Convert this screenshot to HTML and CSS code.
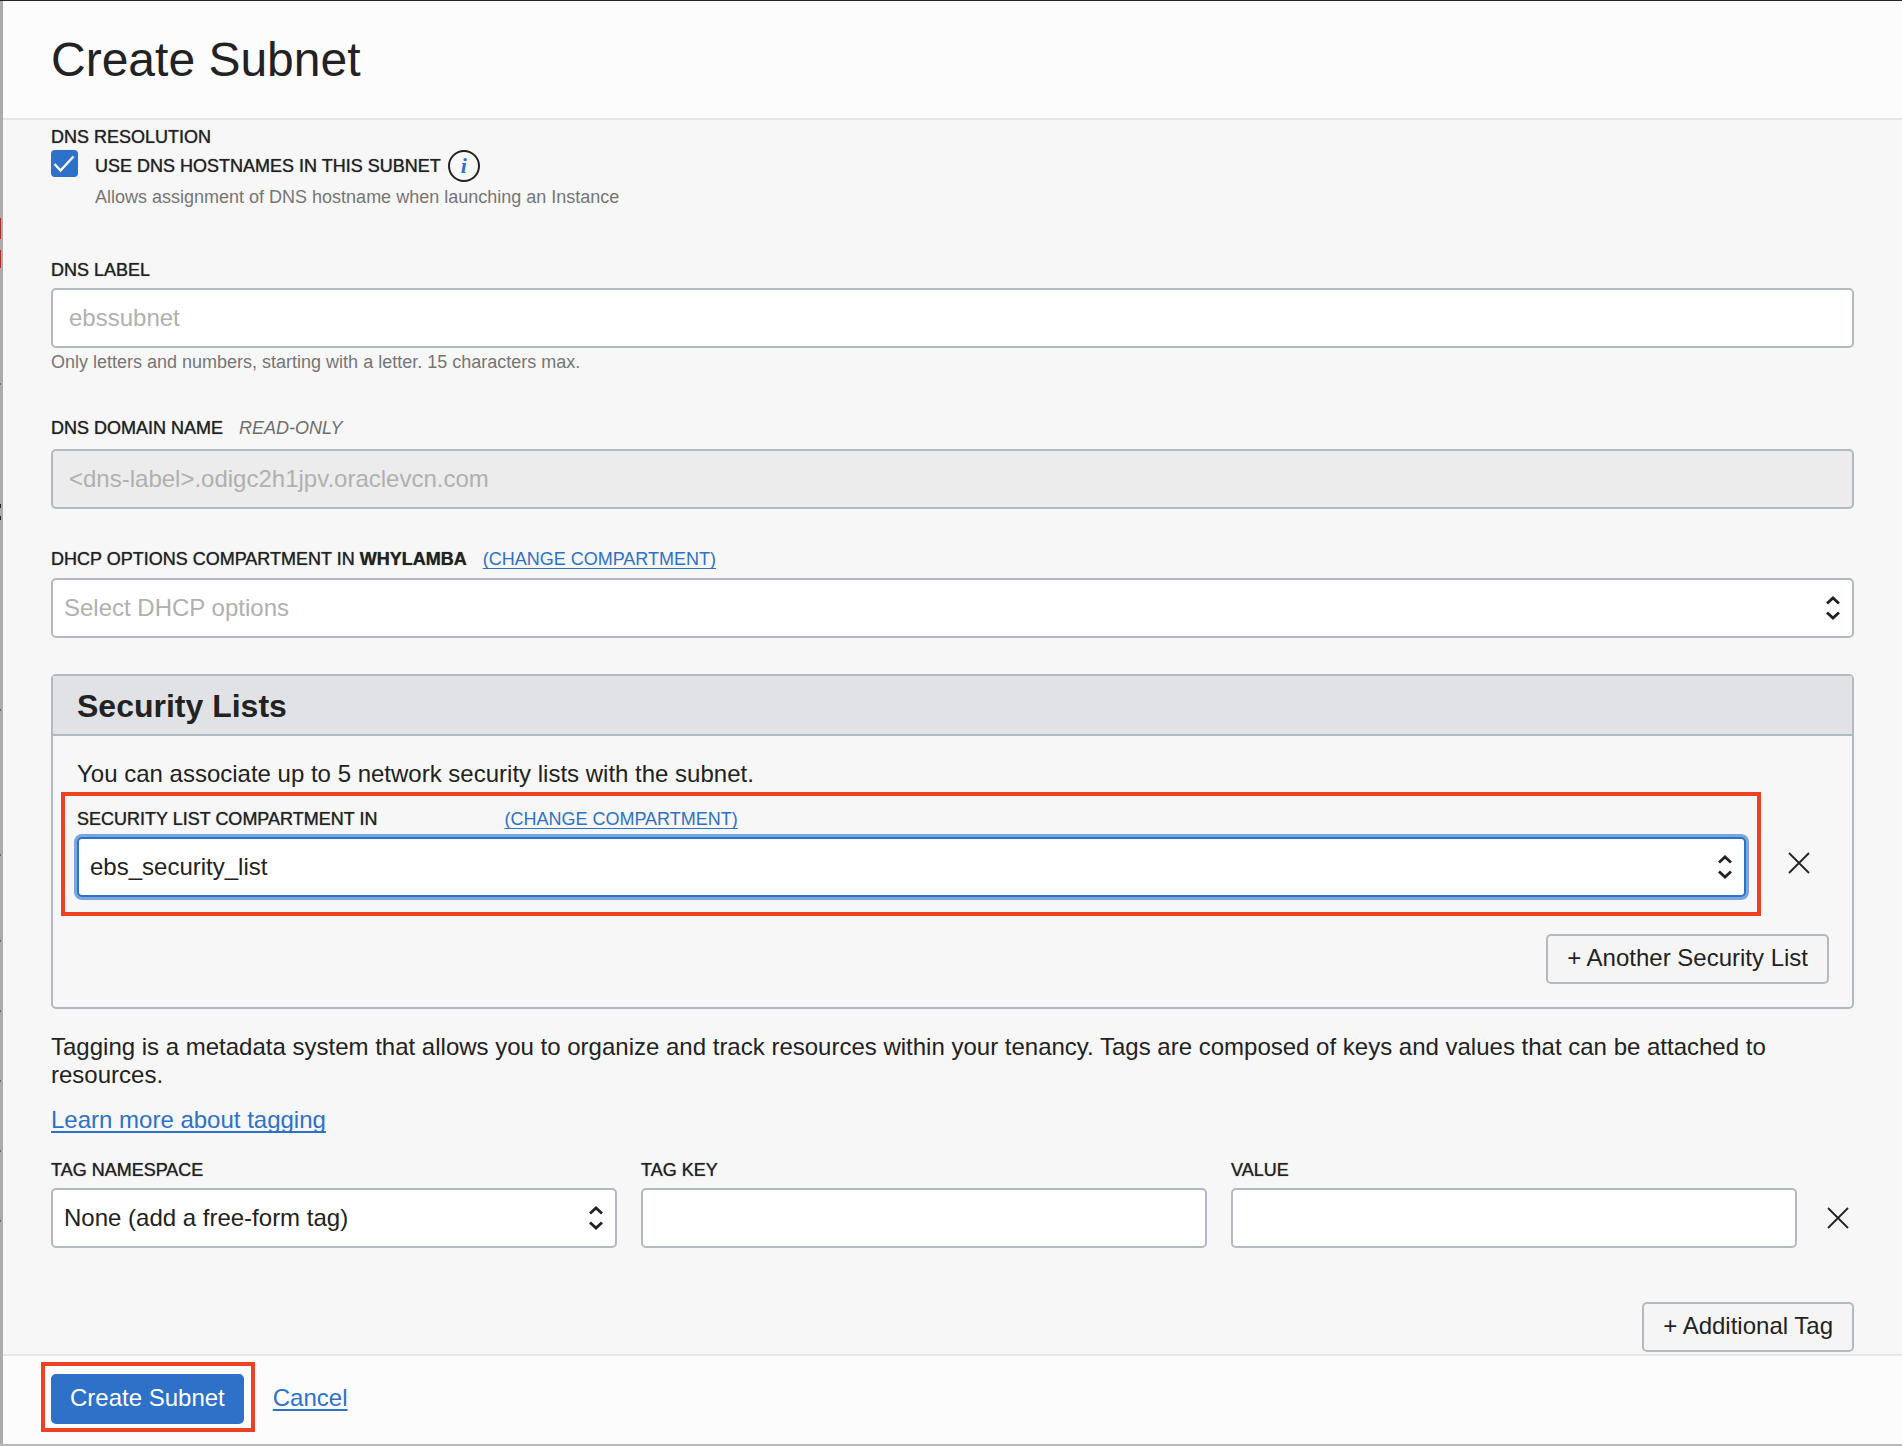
FILE: index.html
```html
<!DOCTYPE html>
<html lang="en">
<head>
<meta charset="utf-8">
<meta name="viewport" content="width=device-width, initial-scale=1">
<title>Create Subnet</title>
<link rel="stylesheet" href="styles.css">
</head>
<body>
<div class="page">
  <div class="gutter"></div>
  <form class="drawer">
    <header class="drawer-header">
      <h1 class="drawer-title">Create Subnet</h1>
    </header>

    <main class="drawer-body">
      <section class="dns-resolution">
        <h2 class="label">DNS RESOLUTION</h2>
        <div class="check-row">
          <span class="checkbox">
            <input type="checkbox" id="use-dns" class="checkbox-input" checked>
            <svg class="checkbox-mark" viewBox="0 0 27 27" aria-hidden="true"><path d="M3.5 14 L9.5 20.5 L22.5 6.5"/></svg>
          </span>
          <label class="label" for="use-dns">USE DNS HOSTNAMES IN THIS SUBNET</label>
          <button type="button" class="info" aria-label="More information">i</button>
        </div>
        <p class="hint hint-indent">Allows assignment of DNS hostname when launching an Instance</p>
      </section>

      <div class="field dns-label">
        <label class="label" for="dns-label">DNS LABEL</label>
        <input class="control" type="text" id="dns-label" placeholder="ebssubnet">
        <p class="hint">Only letters and numbers, starting with a letter. 15 characters max.</p>
      </div>

      <div class="field dns-domain">
        <div class="label-row">
          <label class="label" for="dns-domain">DNS DOMAIN NAME</label>
          <em class="readonly-note">READ-ONLY</em>
        </div>
        <input class="control control-readonly" type="text" id="dns-domain" value="&lt;dns-label&gt;.odigc2h1jpv.oraclevcn.com" readonly>
      </div>

      <div class="field dhcp">
        <div class="label-row">
          <label class="label" for="dhcp">DHCP OPTIONS COMPARTMENT IN <b>WHYLAMBA</b></label>
          <a class="link link-small" href="#">(CHANGE COMPARTMENT)</a>
        </div>
        <div class="select">
          <select class="control control-select control-empty" id="dhcp"><option>Select DHCP options</option></select>
          <svg class="select-arrows" viewBox="0 0 16 26" aria-hidden="true"><path d="M2 8.5 L8 3 L14 8.5 M2 17.5 L8 23 L14 17.5"/></svg>
        </div>
      </div>

      <section class="panel">
        <h2 class="panel-title">Security Lists</h2>
        <div class="panel-body">
          <p class="text">You can associate up to 5 network security lists with the subnet.</p>
          <div class="list-row">
            <div class="field highlight highlight-field">
              <div class="label-row label-row-split">
                <label class="label" for="security-list">SECURITY LIST COMPARTMENT IN</label>
                <a class="link link-small" href="#">(CHANGE COMPARTMENT)</a>
              </div>
              <div class="select">
                <select class="control control-select control-focus" id="security-list"><option>ebs_security_list</option></select>
                <svg class="select-arrows" viewBox="0 0 16 26" aria-hidden="true"><path d="M2 8.5 L8 3 L14 8.5 M2 17.5 L8 23 L14 17.5"/></svg>
              </div>
            </div>
            <button type="button" class="remove remove-list" aria-label="Remove security list">
              <svg class="remove-icon" viewBox="0 0 24 24" aria-hidden="true"><path d="M2 2 L22 22 M22 2 L2 22"/></svg>
            </button>
          </div>
          <button type="button" class="button">+ Another Security List</button>
        </div>
      </section>

      <p class="text tagging-text">Tagging is a metadata system that allows you to organize and track resources within your tenancy. Tags are composed of keys and values that can be attached to resources.</p>
      <p class="text tagging-link"><a class="link" href="#">Learn more about tagging</a></p>

      <div class="tag-row">
        <div class="field">
          <label class="label" for="tag-namespace">TAG NAMESPACE</label>
          <div class="select">
            <select class="control control-select" id="tag-namespace"><option>None (add a free-form tag)</option></select>
            <svg class="select-arrows" viewBox="0 0 16 26" aria-hidden="true"><path d="M2 8.5 L8 3 L14 8.5 M2 17.5 L8 23 L14 17.5"/></svg>
          </div>
        </div>
        <div class="field">
          <label class="label" for="tag-key">TAG KEY</label>
          <input class="control" type="text" id="tag-key">
        </div>
        <div class="field">
          <label class="label" for="tag-value">VALUE</label>
          <input class="control" type="text" id="tag-value">
        </div>
        <button type="button" class="remove" aria-label="Remove tag">
          <svg class="remove-icon" viewBox="0 0 24 24" aria-hidden="true"><path d="M2 2 L22 22 M22 2 L2 22"/></svg>
        </button>
      </div>
      <button type="button" class="button">+ Additional Tag</button>
    </main>

    <footer class="drawer-footer">
      <div class="highlight highlight-action">
        <button type="submit" class="button button-primary">Create Subnet</button>
      </div>
      <a class="link" href="#">Cancel</a>
    </footer>
  </form>
</div>
</body>
</html>
```

FILE: styles.css
```css
* {
  box-sizing: border-box;
}

body {
  margin: 0;
  background: #f7f7f7;
  color: #222;
  font-family: "Liberation Sans", Arial, sans-serif;
  font-size: 24px;
  line-height: 28px;
}

h1, h2, p {
  margin: 0;
  font-weight: 400;
}

.page {
  display: flex;
  min-height: 100vh;
  border-top: 1px solid #1f2433;
  border-bottom: 2px solid #b2b9c0;
}

/* Sliver of the dimmed page behind the drawer */
.gutter {
  flex: none;
  width: 3px;
  background:
    linear-gradient(#b02a2a, #b02a2a) 0 217px / 1px 21px,
    linear-gradient(#b02a2a, #b02a2a) 0 249px / 1px 18px,
    linear-gradient(#666, #666) 0 382px / 1px 2px,
    linear-gradient(#222, #222) 0 503px / 1px 4px,
    linear-gradient(#222, #222) 0 515px / 1px 4px,
    linear-gradient(#666, #666) 0 708px / 1px 2px,
    linear-gradient(#666, #666) 0 853px / 1px 2px,
    linear-gradient(#666, #666) 0 939px / 1px 2px,
    linear-gradient(#666, #666) 0 1009px / 1px 2px,
    linear-gradient(#666, #666) 0 1079px / 1px 2px,
    linear-gradient(#666, #666) 0 1149px / 1px 2px,
    linear-gradient(#666, #666) 0 1219px / 1px 2px,
    #acacac;
  background-repeat: no-repeat;
}

.drawer {
  flex: 1;
  min-width: 0;
  display: flex;
  flex-direction: column;
}

.drawer-header {
  padding: 31px 48px 30px;
  background: #fcfcfc;
  border-bottom: 2px solid #e6e6e6;
}

.drawer-title {
  font-size: 48px;
  line-height: 56px;
}

.drawer-body {
  flex: 1;
  display: flex;
  flex-direction: column;
  padding: 5px 48px 1px;
}

.label {
  font-size: 18px;
  line-height: 24px;
  font-weight: 500;
  text-shadow: 0 0 1px #555;
}

.label-row {
  display: flex;
  gap: 16px;
}

.label-row-split {
  gap: 127px;
}

.readonly-note {
  font-size: 18px;
  line-height: 24px;
  color: #6e6e6e;
}

.hint {
  font-size: 18px;
  line-height: 24px;
  color: #757575;
}

.field {
  display: flex;
  flex-direction: column;
  gap: 6px;
}

.check-row {
  display: flex;
  align-items: center;
  gap: 7px;
  margin: 1px 0 3px;
}

.checkbox {
  position: relative;
  align-self: flex-start;
  width: 27px;
  height: 27px;
  margin-right: 10px;
}

.checkbox-input {
  appearance: none;
  display: block;
  width: 27px;
  height: 27px;
  margin: 0;
  border-radius: 4px;
  background: #2d71c9;
}

.checkbox-mark {
  position: absolute;
  inset: 0;
  fill: none;
  stroke: #fff;
  stroke-width: 2.4;
  pointer-events: none;
}

.info {
  width: 32px;
  height: 32px;
  padding: 0;
  border: 2px solid #222;
  border-radius: 50%;
  background: none;
  color: #2d71c9;
  font: italic 700 22px/28px "Liberation Serif", serif;
}

.hint-indent {
  padding-left: 44px;
}

.dns-label {
  margin-top: 49px;
}

.dns-label .hint {
  margin-top: -4px;
}

.dns-domain {
  margin-top: 42px;
  gap: 9px;
}

.dhcp {
  margin-top: 38px;
  gap: 7px;
}

.control {
  display: block;
  width: 100%;
  height: 60px;
  padding: 0 16px;
  border: 2px solid #b2b9c0;
  border-radius: 5px;
  background: #fff;
  color: #222;
  font: inherit;
}

.control::placeholder {
  color: #b0b0b0;
  opacity: 1;
}

.control-readonly {
  background: #ececec;
  color: #b0b0b0;
}

.control-select {
  appearance: none;
  padding: 0 48px 0 11px;
}

.control-empty {
  color: #b0b0b0;
}

.control-focus {
  border-color: #2d71c9;
  box-shadow: 0 0 0 3px #7ba6df;
}

.select {
  position: relative;
}

.select-arrows {
  position: absolute;
  top: 17px;
  right: 13px;
  width: 16px;
  height: 26px;
  fill: none;
  stroke: #222;
  stroke-width: 2.8;
  pointer-events: none;
}

.link {
  color: #2d71c9;
  text-decoration: underline 2px;
  text-underline-offset: 3px;
  text-decoration-skip-ink: none;
}

.link-small {
  font-size: 18px;
  line-height: 24px;
  text-decoration-thickness: 1px;
}

.panel {
  margin-top: 36px;
  border: 2px solid #b2b9c0;
  border-radius: 5px;
}

.panel-title {
  padding: 12px 24px 10px;
  border-bottom: 2px solid #b2b9c0;
  background: #e1e2e6;
  font-size: 32px;
  line-height: 36px;
  font-weight: 700;
}

.panel-body {
  display: flex;
  flex-direction: column;
  padding: 24px 23px 23px 24px;
}

.list-row {
  display: grid;
  grid-template-columns: 1fr 60px;
  gap: 23px;
  align-items: end;
  margin: 19px 0 37px;
}

.highlight {
  position: relative;
}

.highlight::after {
  content: "";
  position: absolute;
  border: 4px solid #ee4023;
  pointer-events: none;
}

.highlight-field::after {
  inset: -15px -15px -19px -16px;
}

.highlight-action::after {
  inset: -12px -11px -8px -10px;
}

.remove {
  display: flex;
  align-items: center;
  justify-content: center;
  height: 60px;
  padding: 0;
  border: 0;
  background: none;
}

.remove-list {
  padding-bottom: 8px;
}

.remove-icon {
  flex: none;
  width: 24px;
  height: 24px;
  fill: none;
  stroke: #222;
  stroke-width: 1.8;
}

.button {
  align-self: flex-end;
  height: 50px;
  padding: 0 19px 2px;
  border: 2px solid #b2b9c0;
  border-radius: 5px;
  background: #f5f5f5;
  color: #222;
  font: inherit;
}

.tagging-text {
  margin-top: 24px;
}

.tagging-link {
  margin-top: 17px;
}

.tag-row {
  display: grid;
  grid-template-columns: repeat(3, 1fr) 33px;
  gap: 24px;
  align-items: end;
  margin: 24px 0 54px;
}

.drawer-footer {
  display: flex;
  align-items: center;
  gap: 29px;
  padding: 18px 48px 20px;
  border-top: 2px solid #e6e6e6;
  background: #fcfcfc;
}

.drawer-footer .link {
  padding-bottom: 2px;
}

.button-primary {
  display: block;
  padding: 0 17px 2px;
  border-color: #2d71c9;
  background: #2d71c9;
  color: #fff;
}
```
